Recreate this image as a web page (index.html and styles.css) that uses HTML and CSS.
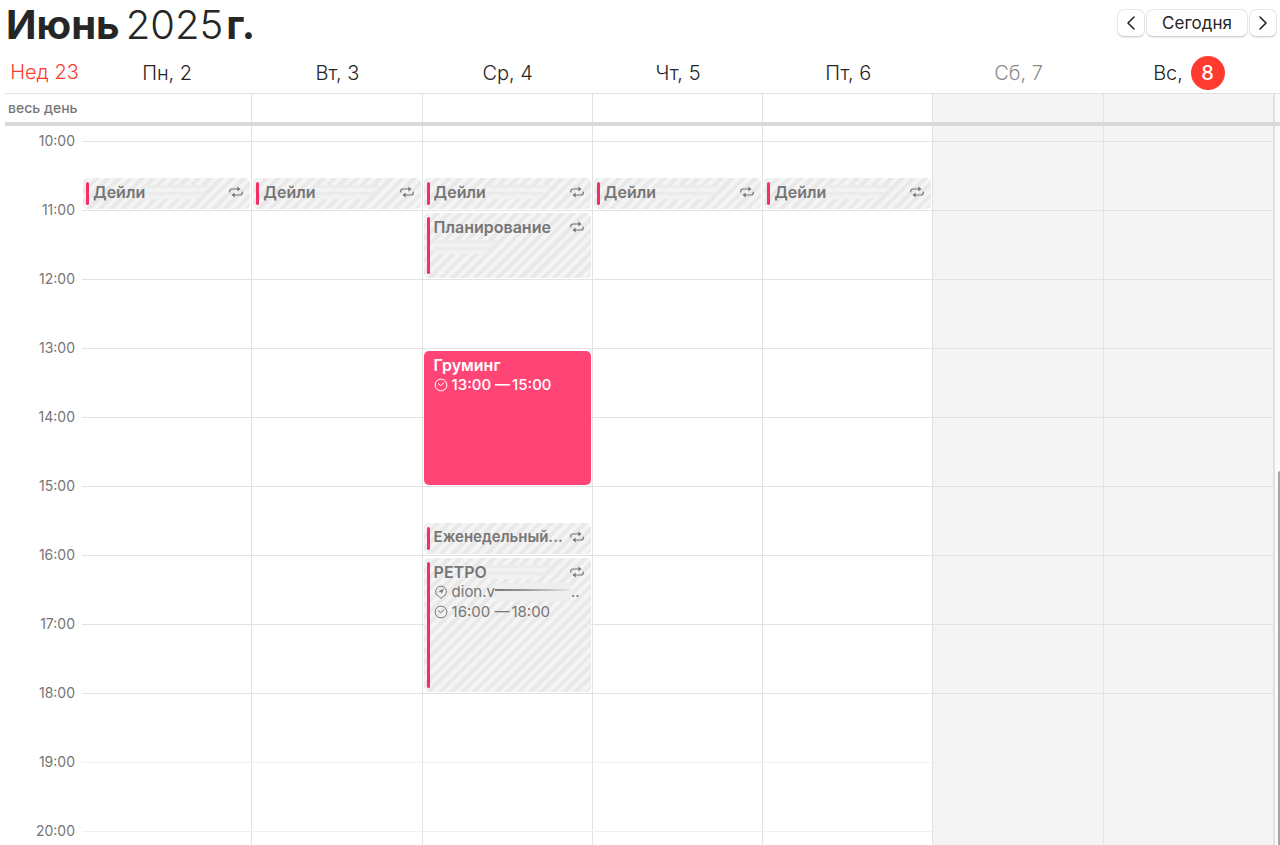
FILE: index.html
```html
<!DOCTYPE html>
<html lang="ru">
<head>
    <meta charset="UTF-8">
    <meta name="viewport" content="width=device-width, initial-scale=1.0">
    <title>Календарь</title>
    <link rel="stylesheet" href="styles.css">
</head>
<body>

    <svg class="sprite" aria-hidden="true">
        <symbol id="repeat" viewBox="0 0 14 12">
            <path d="M.700 6V5.300Q.700 3 3 3H8.500M13.300 6v.700Q13.300 9 11 9H5.500" fill="none" stroke="currentColor" stroke-width="1.200" stroke-linecap="round"/>
            <path d="M8.300.500 11.600 3 8.300 5.500zM5.700 6.500 2.400 9l3.300 2.500z" fill="currentColor"/>
        </symbol>
        <symbol id="clock" viewBox="0 0 14 14">
            <circle cx="7" cy="7" r="5.900" fill="none" stroke="currentColor"/>
            <path d="M4.300 5.600 6.700 7.700 10 4.800" fill="none" stroke="currentColor" stroke-linecap="round" stroke-linejoin="round"/>
        </symbol>
        <symbol id="place" viewBox="0 0 14 14">
            <path d="M7 13.400 4.900 11.500A5.400 5.400 0 1 1 9.100 11.500z" fill="none" stroke="currentColor" stroke-linejoin="round"/>
            <path d="M10 3.700 7.500 9.300 6.900 6.900 4.300 6.300z" fill="currentColor"/>
        </symbol>
    </svg>

    <header class="toolbar">
        <h1><strong>Июнь</strong> <span>2025</span> <strong class="year-mark">г.</strong></h1>
        <nav class="nav">
            <button class="arrow" aria-label="Предыдущая неделя">
                <svg width="10" height="16" viewBox="0 0 10 16"><path d="M8 2 2 8l6 6"/></svg>
            </button>
            <button class="today">Сегодня</button>
            <button class="arrow" aria-label="Следующая неделя">
                <svg width="10" height="16" viewBox="0 0 10 16"><path d="m2 2 6 6-6 6"/></svg>
            </button>
        </nav>
    </header>

    <main class="week">
        <div class="week-row day-names">
            <div class="week-number">Нед 23</div>
            <div>Пн, 2</div>
            <div>Вт, 3</div>
            <div>Ср, 4</div>
            <div>Чт, 5</div>
            <div>Пт, 6</div>
            <div class="muted">Сб, 7</div>
            <div>Вс, <span class="current">8</span></div>
        </div>

        <div class="week-row all-day">
            <div class="all-day-label">весь день</div>
            <div class="cell"></div>
            <div class="cell"></div>
            <div class="cell"></div>
            <div class="cell"></div>
            <div class="cell"></div>
            <div class="cell weekend"></div>
            <div class="cell weekend"></div>
            <div class="gutter"></div>
        </div>

        <div class="week-row hours">
            <!-- колонки дней -->
            <div class="day mon"></div>
            <div class="day tue"></div>
            <div class="day wed"></div>
            <div class="day thu"></div>
            <div class="day fri"></div>
            <div class="day sat weekend"></div>
            <div class="day sun weekend"></div>
            <div class="scroll"><div class="thumb"></div></div>

            <!-- часы, по две строки сетки на час -->
            <time class="hour" style="grid-row: 2">10:00</time><div class="line" style="grid-row: 2"></div>
            <time class="hour" style="grid-row: 4">11:00</time><div class="line" style="grid-row: 4"></div>
            <time class="hour" style="grid-row: 6">12:00</time><div class="line" style="grid-row: 6"></div>
            <time class="hour" style="grid-row: 8">13:00</time><div class="line" style="grid-row: 8"></div>
            <time class="hour" style="grid-row: 10">14:00</time><div class="line" style="grid-row: 10"></div>
            <time class="hour" style="grid-row: 12">15:00</time><div class="line" style="grid-row: 12"></div>
            <time class="hour" style="grid-row: 14">16:00</time><div class="line" style="grid-row: 14"></div>
            <time class="hour" style="grid-row: 16">17:00</time><div class="line" style="grid-row: 16"></div>
            <time class="hour" style="grid-row: 18">18:00</time><div class="line" style="grid-row: 18"></div>
            <time class="hour" style="grid-row: 20">19:00</time><div class="line faint" style="grid-row: 20"></div>
            <time class="hour" style="grid-row: 22">20:00</time><div class="line faint" style="grid-row: 22"></div>

            <!-- события -->
            <article class="event mon" style="grid-row: 3 / 4">
                <div class="event-body">
                    <div class="event-title"><b>Дейли</b><i class="smudge"></i><svg class="repeat"><use href="#repeat"/></svg></div>
                </div>
            </article>
            <article class="event tue" style="grid-row: 3 / 4">
                <div class="event-body">
                    <div class="event-title"><b>Дейли</b><i class="smudge"></i><svg class="repeat"><use href="#repeat"/></svg></div>
                </div>
            </article>
            <article class="event wed" style="grid-row: 3 / 4">
                <div class="event-body">
                    <div class="event-title"><b>Дейли</b><i class="smudge"></i><svg class="repeat"><use href="#repeat"/></svg></div>
                </div>
            </article>
            <article class="event thu" style="grid-row: 3 / 4">
                <div class="event-body">
                    <div class="event-title"><b>Дейли</b><i class="smudge"></i><svg class="repeat"><use href="#repeat"/></svg></div>
                </div>
            </article>
            <article class="event fri" style="grid-row: 3 / 4">
                <div class="event-body">
                    <div class="event-title"><b>Дейли</b><i class="smudge"></i><svg class="repeat"><use href="#repeat"/></svg></div>
                </div>
            </article>

            <article class="event wed" style="grid-row: 4 / 6">
                <div class="event-body">
                    <div class="event-title"><b>Планирование</b><svg class="repeat"><use href="#repeat"/></svg></div>
                    <div class="event-line"><i class="smudge"></i></div>
                </div>
            </article>

            <article class="event solid wed" style="grid-row: 8 / 12">
                <div class="event-body">
                    <div class="event-title"><b>Груминг</b></div>
                    <div class="event-line"><svg><use href="#clock"/></svg>13:00 —<span>15:00</span></div>
                </div>
            </article>

            <article class="event wed" style="grid-row: 13 / 14">
                <div class="event-body">
                    <div class="event-title long"><b>Еженедельный...</b><svg class="repeat"><use href="#repeat"/></svg></div>
                </div>
            </article>

            <article class="event wed" style="grid-row: 14 / 18">
                <div class="event-body">
                    <div class="event-title"><b>РЕТРО</b><i class="smudge"></i><svg class="repeat"><use href="#repeat"/></svg></div>
                    <div class="event-line"><svg><use href="#place"/></svg>dion.v<i class="smudge link"></i>..</div>
                    <div class="event-line"><svg><use href="#clock"/></svg>16:00 —<span>18:00</span></div>
                </div>
            </article>
        </div>
    </main>

</body>
</html>
```
FILE: styles.css
```css
:root {
    --text: #262626;
    --muted: #767676;
    --line: #e2e2e2;
    --weekend: #f4f4f4;
    --red: #ff3b30;
    --pink: #ff4575;
    --bar: #f52e66;
}
* {
    box-sizing: border-box;
}
body {
    margin: 0;
    height: 100vh;
    overflow: hidden;
    display: flex;
    flex-direction: column;
    background: #fff;
    color: var(--text);
    font-family: Inter, "Liberation Sans", sans-serif;
}
.sprite {
    display: none;
}

/* шапка */
.toolbar {
    display: flex;
    justify-content: space-between;
    align-items: flex-start;
    height: 53px;
    padding: 0 3px 0 6px;
}
h1 {
    display: flex;
    gap: 6px;
    margin: 0;
    font-size: 40px;
    line-height: 49px;
    font-weight: 300;
}
h1 strong {
    font-weight: 700;
}
.year-mark {
    margin-left: -3px;
}
.nav {
    display: flex;
    gap: 1px;
    padding-top: 9px;
}
button {
    height: 28px;
    padding: 0;
    border: 1px solid #e6e6e6;
    border-bottom-color: #d2d2d2;
    border-radius: 7px;
    background: #fff;
    box-shadow: 0 1px 1px rgba(0, 0, 0, 0.08);
    color: var(--text);
    font: 500 16px/26px Inter, "Liberation Sans", sans-serif;
}
.arrow {
    display: flex;
    align-items: center;
    justify-content: center;
    width: 28px;
}
.arrow path {
    fill: none;
    stroke: currentColor;
    stroke-width: 1.6;
    stroke-linecap: round;
    stroke-linejoin: round;
}
.today {
    width: 102px;
    font-size: 17px;
    font-weight: 400;
}

/* неделя */
.week {
    flex: 1;
    min-height: 0;
    display: flex;
    flex-direction: column;
}
.week-row {
    display: grid;
    grid-template-columns: 82px repeat(7, minmax(0, 1fr)) 6px;
}
.day-names {
    height: 40px;
    font-size: 20px;
    font-weight: 300;
    line-height: 40px;
    text-align: center;
}
.week-number {
    padding-left: 7px;
    line-height: 38px;
    color: var(--red);
}
.muted {
    color: #8c8c8c;
}
.current {
    display: inline-block;
    width: 34px;
    margin-left: 2px;
    border-radius: 50%;
    background: var(--red);
    color: #fff;
    font-weight: 500;
    line-height: 34px;
}
.all-day {
    height: 33px;
    margin-left: 5px;
    grid-template-columns: 77px repeat(7, minmax(0, 1fr)) 6px;
    border-top: 1px solid var(--line);
    border-bottom: 4px solid #d9d9d9;
}
.all-day-label {
    padding-left: 3px;
    color: var(--muted);
    font-size: 14px;
    font-weight: 500;
    line-height: 28px;
}
.cell,
.day {
    border-right: 1px solid var(--line);
}
.weekend {
    background: var(--weekend);
}
.gutter,
.scroll {
    background: #fafafa;
    border-left: 1px solid var(--line);
}

.hours {
    flex: 1;
    min-height: 0;
    overflow: hidden;
    grid-template-rows: 15px repeat(11, 34px 35px);
}
.day,
.scroll {
    grid-row: 1 / -1;
}
.mon { grid-column: 2; }
.tue { grid-column: 3; }
.wed { grid-column: 4; }
.thu { grid-column: 5; }
.fri { grid-column: 6; }
.sat { grid-column: 7; }
.sun { grid-column: 8; }
.scroll {
    grid-column: 9;
    display: flex;
    justify-content: flex-end;
    padding-top: 345px;
}
.thumb {
    width: 2px;
    background: #a6a6a6;
    border-top-left-radius: 2px;
}
.hour {
    grid-column: 1;
    margin-top: -10px;
    padding-right: 7px;
    color: var(--muted);
    font-size: 14px;
    line-height: 20px;
    text-align: right;
}
.line {
    grid-column: 2 / 9;
    border-top: 1px solid var(--line);
}
.faint {
    border-color: #f0f0f0;
}

/* события */
.event {
    display: flex;
    gap: 4px;
    min-width: 0;
    margin: 3px 2px 1px 1px;
    padding: 4px 7px 4px 3px;
    border-radius: 5px;
    background: repeating-linear-gradient(135deg, #e9e9e9 0 4px, #f4f4f4 4px 8px);
    color: var(--muted);
    font-size: 16px;
    line-height: 20px;
    white-space: nowrap;
}
.event::before {
    content: "";
    flex: none;
    width: 3px;
    border-radius: 2px;
    background: var(--bar);
}
.event-body {
    flex: 1;
    min-width: 0;
}
.event-title,
.event-line {
    display: flex;
    align-items: center;
    height: 20px;
}
.event-title b {
    font-weight: 600;
}
.event-line,
.long {
    font-size: 15px;
}
.repeat {
    flex: none;
    width: 14px;
    height: 12px;
    margin-left: auto;
}
.event-line svg {
    flex: none;
    width: 14px;
    height: 14px;
    margin-right: 4px;
}
.event-line span {
    margin-left: 2px;
}
.solid {
    background: var(--pink);
    color: #fff;
}
.solid::before {
    background: none;
}
.solid .event-line {
    font-weight: 500;
}
.smudge {
    width: 64px;
    height: 14px;
    background: linear-gradient(#ececec 0 3px, #f2f2f2 3px 7px, #ebebeb 7px 10px, #f1f1f1 10px);
    clip-path: polygon(0 0, 100% 0, 82% 100%, 0 100%);
}
.link {
    width: 76px;
    height: 18px;
    background:
        linear-gradient(90deg, #777, #999 40%, #e6e6e6) 0 6px / 100% 2px no-repeat,
        #eee;
    clip-path: none;
}
```
